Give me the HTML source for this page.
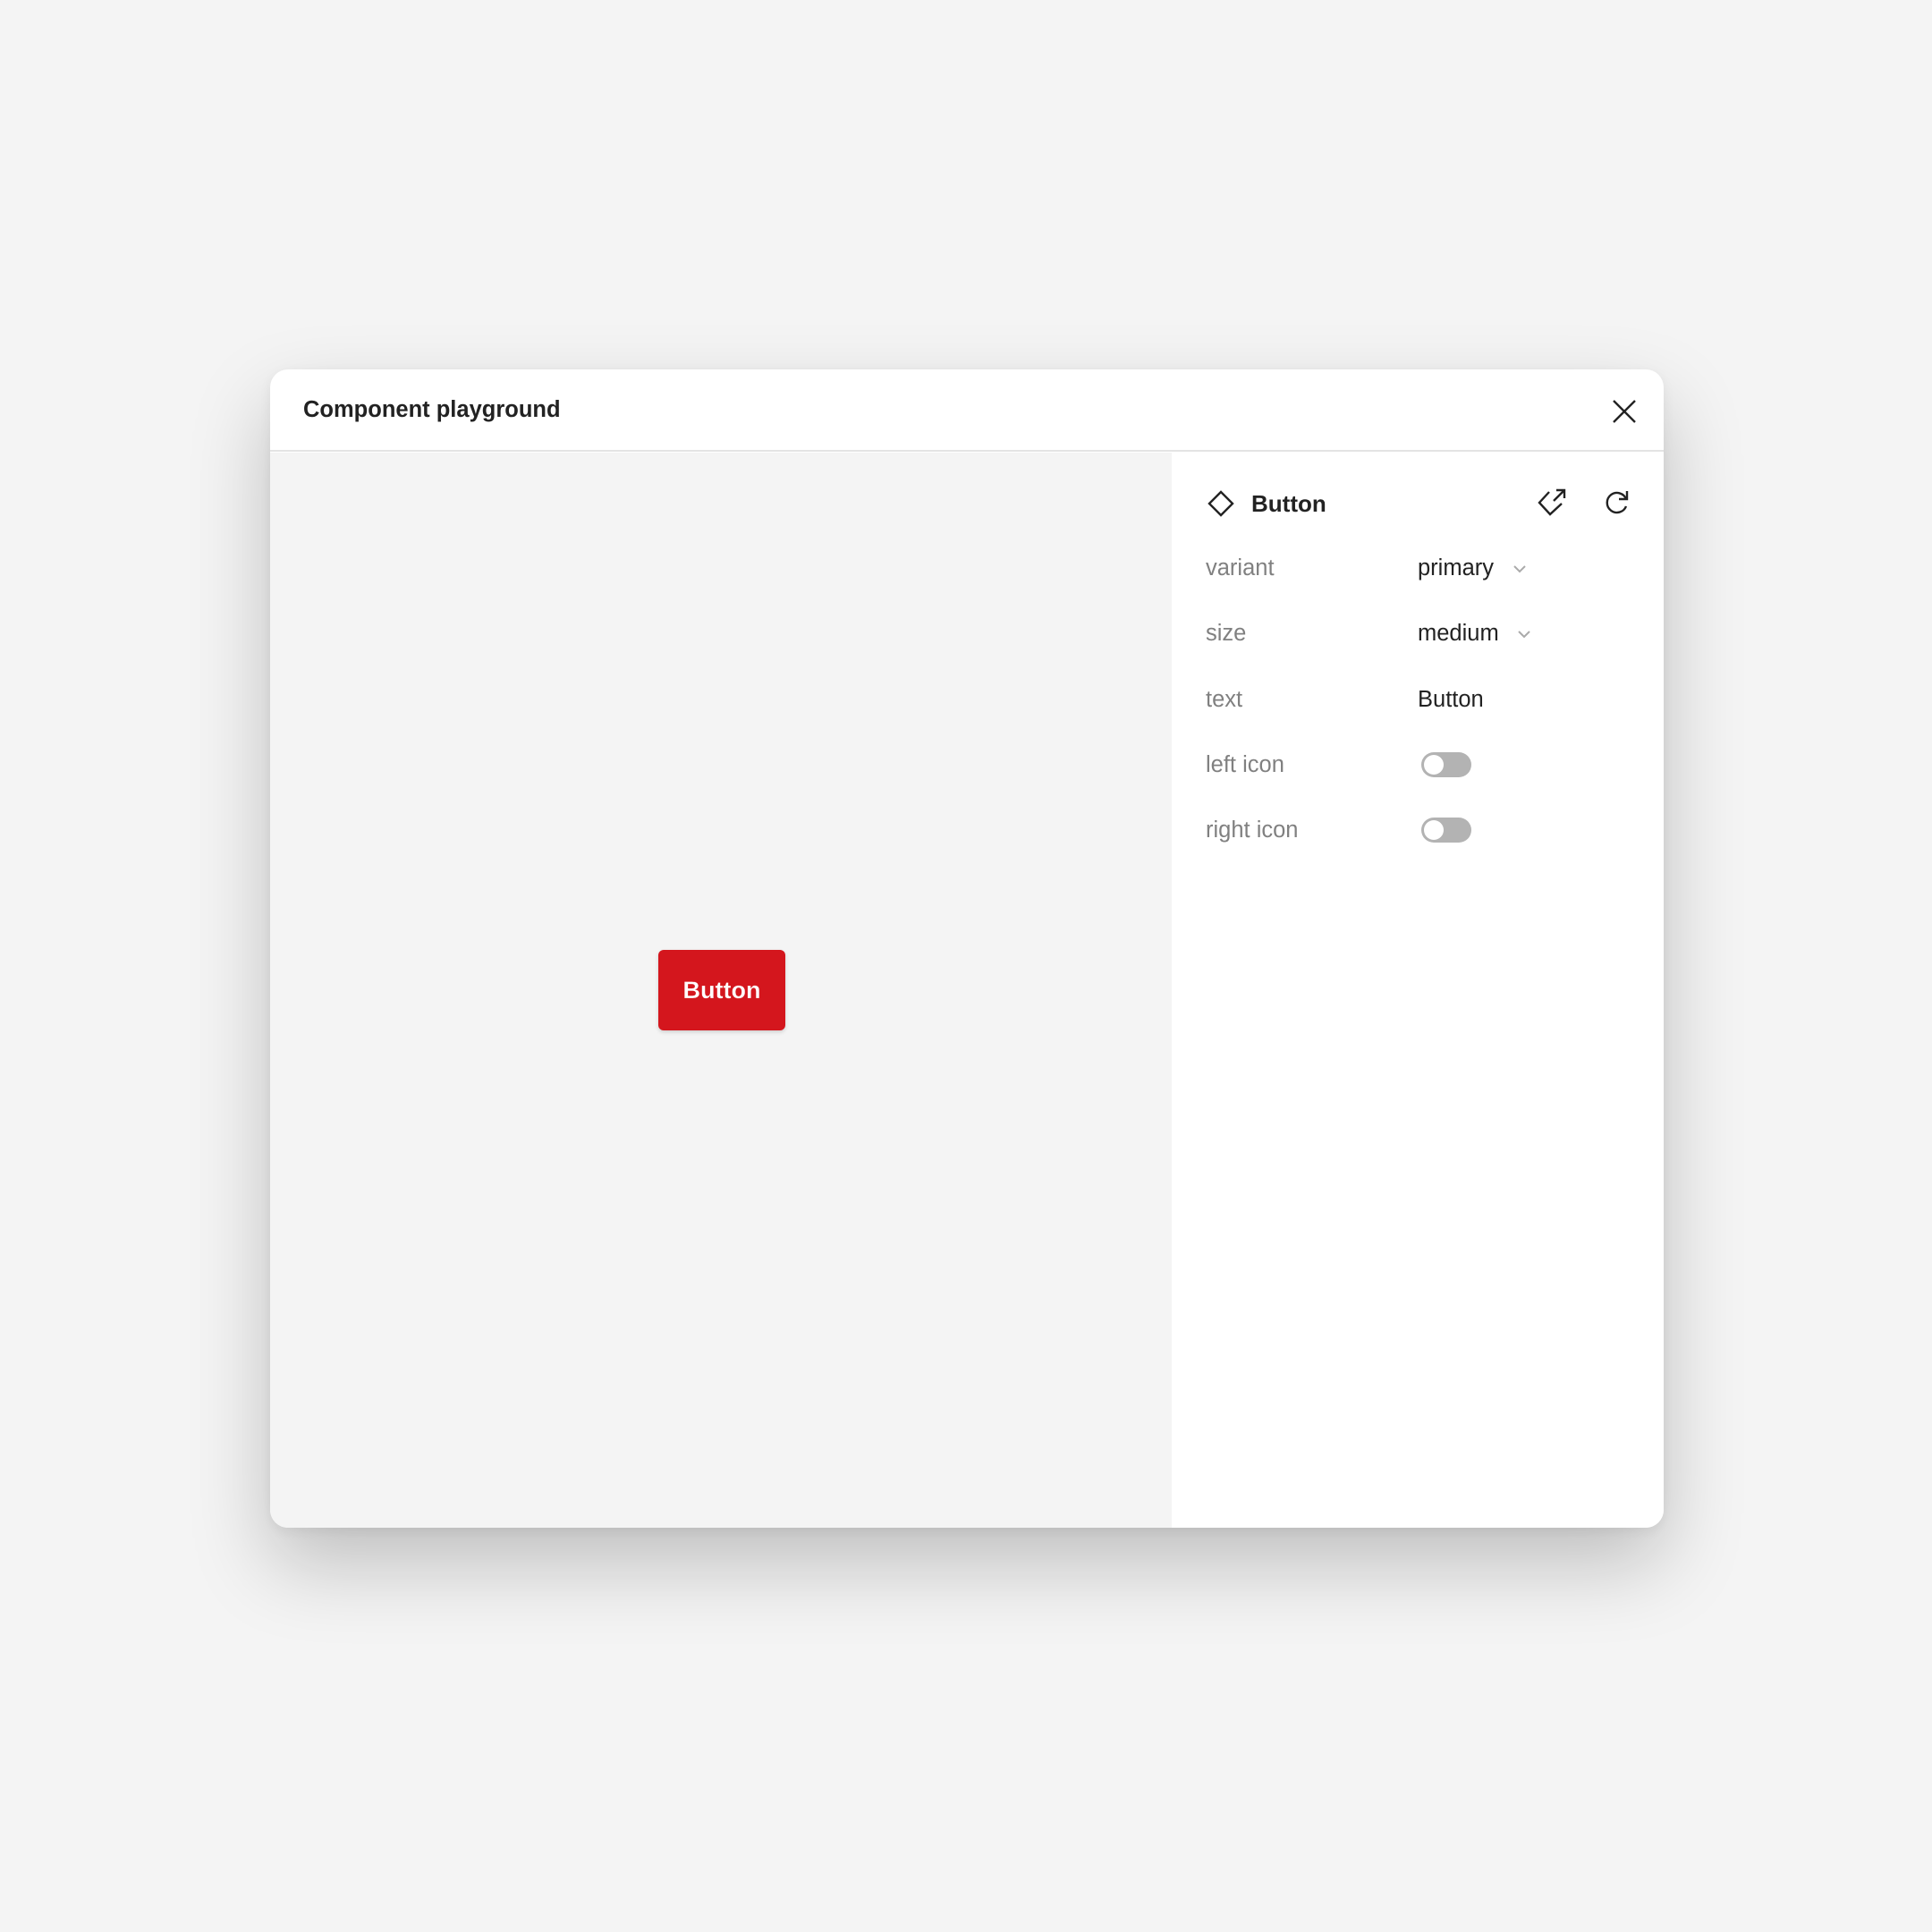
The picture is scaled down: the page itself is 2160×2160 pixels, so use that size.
<!DOCTYPE html>
<html><head><meta charset="utf-8"><style>
*{margin:0;padding:0;box-sizing:border-box}
body{width:2160px;height:2160px;background:#f4f4f4;font-family:"Liberation Sans",sans-serif;position:relative;overflow:hidden}
.dlg{position:absolute;left:302px;top:413px;width:1558px;height:1295px;background:#fff;border-radius:20px;overflow:hidden;box-shadow:0 40px 90px rgba(0,0,0,.22),0 4px 14px rgba(0,0,0,.06)}
.hdr{position:absolute;left:0;top:0;right:0;height:92px;border-bottom:2px solid #e4e4e4}
.title{position:absolute;left:37px;top:31px;font-size:25.5px;font-weight:bold;color:#222}
.canvas{position:absolute;left:0;top:93px;width:1008px;bottom:0;background:#f4f4f4}
.btn{position:absolute;left:434px;top:556px;width:142px;height:90px;background:#d4161d;border-radius:6px;color:#fff;font-size:27px;font-weight:bold;text-align:center;line-height:90px;box-shadow:0 2px 4px rgba(0,0,0,.15);-webkit-text-stroke:0.2px #d4161d}
.panel{position:absolute;left:1008px;top:93px;right:0;bottom:0;background:#fff}
.t{position:absolute;font-size:25.5px;line-height:30px}
.lab{left:38px;color:#808080}
.val{left:275px;color:#222}
.tog{position:absolute;left:279px;width:56px;height:28px;border-radius:14px;background:#b3b3b3}
.tog::after{content:"";position:absolute;left:3px;top:3px;width:22px;height:22px;border-radius:50%;background:#fff}
</style></head><body>
<div class="dlg">
 <div class="hdr">
  <div class="title">Component playground</div>
  <svg style="position:absolute;left:1500px;top:33px" width="28" height="28" viewBox="0 0 28 28"><path d="M2 2L26 26M26 2L2 26" stroke="#222" stroke-width="2.4"/></svg>
 </div>
 <div class="canvas"><div class="btn">Button</div></div>
 <div class="panel">
  <svg style="position:absolute;left:40px;top:42px" width="30" height="30" viewBox="0 0 30 30"><path d="M15 2L28 15L15 28L2 15Z" fill="none" stroke="#222" stroke-width="2.4"/></svg>
  <div class="t" style="left:89px;top:42px;font-weight:bold;font-size:26px;color:#222">Button</div>
  <svg style="position:absolute;left:408px;top:38px" width="36" height="36" viewBox="0 0 36 36"><path d="M14 6L3 18L15 31L28 19" fill="none" stroke="#222" stroke-width="2.4"/><path d="M19 16L31 4M22 4H31V13" fill="none" stroke="#222" stroke-width="2.4"/></svg>
  <svg style="position:absolute;left:482px;top:40px" width="32" height="32" viewBox="0 0 32 32"><path d="M26 12A11 11 0 1 0 26 20" fill="none" stroke="#222" stroke-width="2.4"/><path d="M27 3V12H18" fill="none" stroke="#222" stroke-width="2.4"/></svg>
  <div class="t lab" style="top:114px">variant</div>
  <div class="t val" style="top:114px">primary</div>
  <svg style="position:absolute;left:381px;top:124px" width="16" height="12" viewBox="0 0 16 12"><path d="M2 3L8 9L14 3" fill="none" stroke="#aaa" stroke-width="2"/></svg>
  <div class="t lab" style="top:187px">size</div>
  <div class="t val" style="top:187px">medium</div>
  <svg style="position:absolute;left:386px;top:197px" width="16" height="12" viewBox="0 0 16 12"><path d="M2 3L8 9L14 3" fill="none" stroke="#aaa" stroke-width="2"/></svg>
  <div class="t lab" style="top:261px">text</div>
  <div class="t val" style="top:261px">Button</div>
  <div class="t lab" style="top:334px">left icon</div>
  <div class="tog" style="top:335px"></div>
  <div class="t lab" style="top:407px">right icon</div>
  <div class="tog" style="top:408px"></div>
 </div>
</div>
</body></html>
